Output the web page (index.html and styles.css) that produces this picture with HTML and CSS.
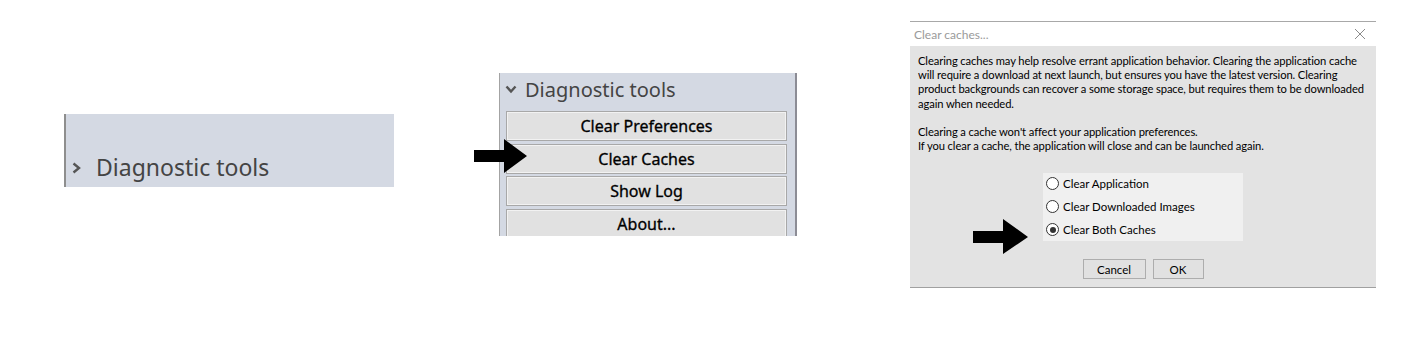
FILE: index.html
```html
<!DOCTYPE html>
<html lang="en">
<head>
    <meta charset="UTF-8">
    <meta name="viewport" content="width=device-width, initial-scale=1.0">
    <title>Clear Caches</title>
    <link rel="stylesheet" href="styles.css">
</head>
<body>
    <div class="steps">
        <!-- Step 1: collapsed section -->
        <div class="panel-collapsed">
            <div class="section-head big">
                <svg class="chevron" width="9" height="12" viewBox="0 0 9 12">
                    <polyline points="1.5,1.5 7,6 1.5,10.5" fill="none" stroke="#555" stroke-width="2.4"/>
                </svg>
                <span>Diagnostic tools</span>
            </div>
        </div>

        <!-- Step 2: expanded section -->
        <div class="panel-wrap">
            <div class="panel-open">
                <div class="section-head">
                    <svg class="chevron-down" width="12" height="9" viewBox="0 0 12 9">
                        <polyline points="1.5,1.5 6,6.5 10.5,1.5" fill="none" stroke="#555" stroke-width="2.4"/>
                    </svg>
                    <span>Diagnostic tools</span>
                </div>
                <div class="tool-list">
                    <button class="tool-btn">Clear Preferences</button>
                    <button class="tool-btn">Clear Caches</button>
                    <button class="tool-btn">Show Log</button>
                    <button class="tool-btn">About...</button>
                </div>
            </div>
            <svg class="pointer pointer-tools" width="53" height="34" viewBox="0 0 53 34">
                <polygon points="0,11 30,11 30,0 53,17 30,34 30,23 0,23" fill="#000"/>
            </svg>
        </div>

        <!-- Step 3: dialog -->
        <div class="dialog">
            <div class="dialog-title">
                <span>Clear caches...</span>
                <svg class="close" width="12" height="12" viewBox="0 0 12 12">
                    <path d="M1 1 L11 11 M11 1 L1 11" stroke="#8a8a8a" stroke-width="1"/>
                </svg>
            </div>
            <div class="dialog-body">
                <p class="msg">Clearing caches may help resolve errant application behavior. Clearing the application cache<br>will require a download at next launch, but ensures you have the latest version. Clearing<br>product backgrounds can recover a some storage space, but requires them to be downloaded<br>again when needed.</p>
                <p class="msg">Clearing a cache won't affect your application preferences.<br>If you clear a cache, the application will close and can be launched again.</p>

                <div class="options">
                    <label class="option"><span class="radio"></span>Clear Application</label>
                    <label class="option"><span class="radio"></span>Clear Downloaded Images</label>
                    <label class="option"><span class="radio checked"></span>Clear Both Caches</label>
                </div>

                <div class="actions">
                    <button class="dlg-btn cancel">Cancel</button>
                    <button class="dlg-btn ok">OK</button>
                </div>
            </div>
            <svg class="pointer pointer-option" width="55" height="35" viewBox="0 0 55 35">
                <polygon points="0,12 30,12 30,0 55,18 30,35 30,24 0,24" fill="#000"/>
            </svg>
        </div>
    </div>
</body>
</html>
```

FILE: styles.css
```css
body {
    margin: 0;
    background: #fff;
    font-family: "Noto Sans", "Open Sans", sans-serif;
    color: #000;
}
.steps {
    display: flex;
    align-items: flex-start;
}

/* Collapsed section */
.panel-collapsed {
    margin-left: 64px;
    margin-top: 114px;
    width: 328px;
    height: 73px;
    background: #d4d9e3;
    border-left: 2px solid #8e8e8e;
    display: flex;
    align-items: flex-end;
}
.section-head {
    display: flex;
    align-items: center;
    color: #444;
    font-size: 20px;
    height: 32px;
    padding-left: 5px;
}
.section-head.big {
    font-size: 23px;
    height: 26px;
    padding-left: 6px;
    margin-bottom: 7px;
}
.chevron {
    margin-right: 15px;
    margin-top: 2px;
}
.chevron-down {
    margin-right: 8px;
    margin-top: 0;
}

/* Expanded section */
.panel-wrap {
    position: relative;
    margin-left: 105px;
    margin-top: 73px;
}
.panel-open {
    width: 295px;
    height: 163px;
    background: #d4d9e3;
    border-left: 1px solid #a3a3a3;
    border-right: 2px solid #8c8c95;
    overflow: hidden;
}
.tool-list {
    display: flex;
    flex-direction: column;
    gap: 2.7px;
    padding: 6px 8px 0 6px;
}
.tool-btn {
    height: 30px;
    background: #e1e1e1;
    border: 1px solid #a8a8a8;
    box-shadow: inset 0 0 0 1px #f2f2f2;
    font-family: "Noto Sans", "Open Sans", sans-serif;
    font-size: 16px;
    font-weight: normal;
    -webkit-text-stroke: 0.3px #000;
    color: #000;
    padding: 0;
}
.pointer {
    position: absolute;
}
.pointer-tools {
    left: -25px;
    top: 66px;
}

/* Dialog */
.dialog {
    position: relative;
    margin-left: 113px;
    margin-top: 21px;
    width: 466px;
    border-top: 1px solid #a8a8a8;
    border-bottom: 1px solid #a0a0a0;
    background: #e3e3e3;
    font-family: Lato, "Noto Sans", sans-serif;
    font-size: 11.2px;
}
.dialog-title {
    height: 24px;
    background: #fff;
    display: flex;
    align-items: center;
    justify-content: space-between;
    padding: 0 10px 0 4px;
    color: #9a9a9a;
    font-size: 12px;
}
.dialog-body {
    padding: 8px 8px 8px 8px;
}
.msg {
    margin: 0 0 14px 0;
    line-height: 14.2px;
    letter-spacing: -0.1px;
    white-space: nowrap;
}
.options {
    width: 200px;
    margin: 20px auto 0 auto;
    padding: 4px 0 5px 0;
    background: #f0f0f0;
    display: flex;
    flex-direction: column;
    gap: 10px;
}
.option {
    display: flex;
    align-items: center;
    height: 13px;
    padding-left: 3px;
    font-size: 11.5px;
}
.radio {
    width: 11px;
    height: 11px;
    border: 1px solid #333;
    border-radius: 50%;
    background: #fff;
    margin-right: 4px;
    position: relative;
}
.radio.checked::after {
    content: "";
    position: absolute;
    left: 2.5px;
    top: 2.5px;
    width: 6px;
    height: 6px;
    border-radius: 50%;
    background: #333;
}
.actions {
    display: flex;
    justify-content: center;
    gap: 7px;
    margin-top: 18px;
}
.dlg-btn {
    height: 20px;
    background: #e1e1e1;
    border: 1px solid #adadad;
    font-family: Lato, "Noto Sans", sans-serif;
    font-size: 11.5px;
    color: #000;
    padding: 0;
}
.dlg-btn.cancel {
    width: 63px;
}
.dlg-btn.ok {
    width: 51px;
}
.pointer-option {
    left: 63px;
    top: 197px;
}
```
